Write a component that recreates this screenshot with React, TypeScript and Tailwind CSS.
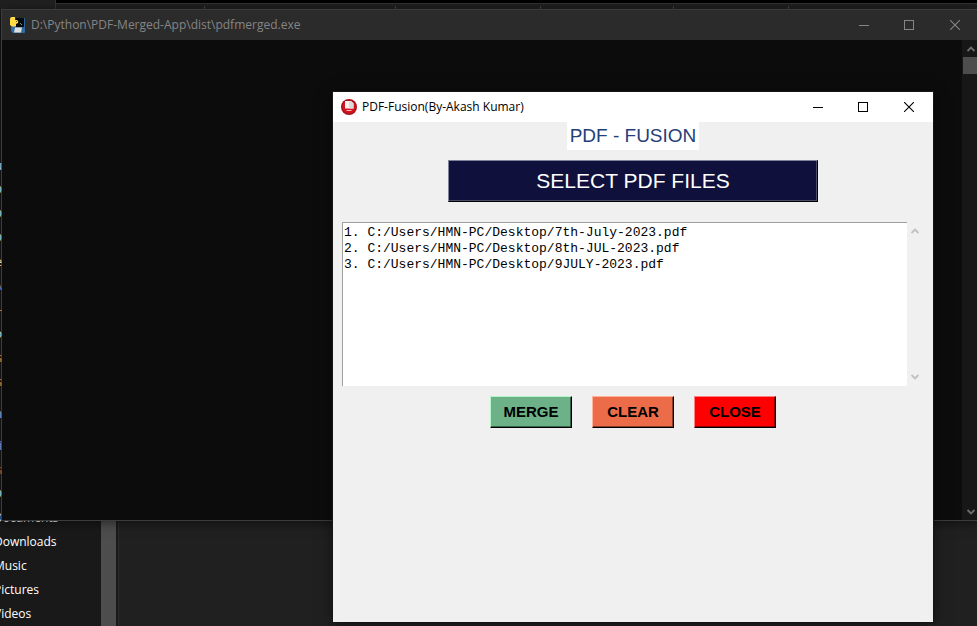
import React from "react";

const columnWidths = ["w-[191px]", "w-[145px]", "w-[133px]", "w-[115px]"];

const folders = ["Documents", "Downloads", "Music", "Pictures", "Videos"];

const edgeLabels = [
  { text: "u", color: "text-[#a5c4f0]" },
  { text: "D", color: "text-[#9cd3ee]" },
  { text: "D", color: "text-[#9cd3ee]" },
  { text: "D", color: "text-[#9cd3ee]" },
  { text: "e", color: "text-[#e8cf9d]" },
  { text: "\\", color: "text-[#6f8fe0]" },
  { text: "-", color: "text-[#b57a45]" },
  { text: "o", color: "text-[#b4e4e8]" },
  { text: "s", color: "text-[#d78a35]" },
  { text: "s", color: "text-[#d78a35]" },
];

const lowerEdgeLabels = [
  { text: "n", color: "text-[#8ea2f0]", height: "h-8" },
  { text: "i", color: "text-[#7f8df0]", height: "h-8" },
  { text: "s", color: "text-[#b0552a]", height: "h-4" },
  { text: "D", color: "text-[#9cd3ee]", height: "h-8" },
];

const files = [
  "C:/Users/HMN-PC/Desktop/7th-July-2023.pdf",
  "C:/Users/HMN-PC/Desktop/8th-JUL-2023.pdf",
  "C:/Users/HMN-PC/Desktop/9JULY-2023.pdf",
];

function WindowControls() {
  return (
    <div className="flex h-full">
      <button type="button" aria-label="Minimize" className="flex w-[45px] items-center justify-center">
        <svg width="10" height="10" viewBox="0 0 10 10" fill="none" stroke="currentColor" shapeRendering="crispEdges">
          <path d="M0 5.5H10" />
        </svg>
      </button>
      <button type="button" aria-label="Maximize" className="flex w-[45px] items-center justify-center">
        <svg width="10" height="10" viewBox="0 0 10 10" fill="none" stroke="currentColor" shapeRendering="crispEdges">
          <rect x="0.5" y="0.5" width="9" height="9" />
        </svg>
      </button>
      <button type="button" aria-label="Close window" className="flex w-12 items-center justify-center">
        <svg width="10" height="10" viewBox="0 0 10 10" fill="none" stroke="currentColor" strokeWidth="1.1">
          <path d="M0 0L10 10M10 0L0 10" />
        </svg>
      </button>
    </div>
  );
}

function Chevron({ down = false }: { down?: boolean }) {
  return (
    <svg width="8" height="6" viewBox="0 0 8 6" fill="none" stroke="currentColor" strokeWidth="1.8">
      <path d={down ? "M0.5 1L4 4.5L7.5 1" : "M0.5 5L4 1.5L7.5 5"} />
    </svg>
  );
}

function PythonIcon() {
  return (
    <svg width="16" height="16" viewBox="0 0 16 16" aria-hidden="true">
      <path d="M1 8H15V15Q15 16 14 16H3Q1 15 1 13Z" fill="#2f6ea5" />
      <rect x="11" y="1" width="4" height="11" fill="#2c659b" />
      <rect x="6" y="1" width="8" height="9" fill="#080a0c" />
      <path d="M0 2Q0 0 2 0H5V3H7Q9 4 8 6L6 7V9Q3 11 0 8Z" fill="#ffdc45" />
      <circle cx="6.5" cy="4.5" r="0.6" fill="#5c4a10" />
      <path d="M10 6L12 8" stroke="#7f8b96" />
      <path d="M5 10.5H12L11 15.5H4Z" fill="#dedede" />
    </svg>
  );
}

function FusionIcon() {
  return (
    <svg width="16" height="16" viewBox="0 0 16 16" aria-hidden="true">
      <circle cx="8" cy="8" r="8" fill="#a80f1c" />
      <circle cx="8" cy="8" r="6.6" fill="#d4131f" />
      <path d="M4 2H10L12.5 4.5V9.5H4Z" fill="#f7f0f0" />
      <path d="M8 2.5V9.5H12.5V4.5L10 2Z" fill="#ded8d8" />
      <path d="M5.5 11.5H10.5" stroke="#f4b9bc" strokeWidth="1" />
    </svg>
  );
}

function Explorer() {
  return (
    <div className="flex h-full flex-col bg-[#202020]">
      <div className="flex h-[10px] shrink-0">
        <div className="w-[55px] bg-[#202020]" />
        <div className="flex flex-1 flex-col border-l border-[#333333] bg-[#1f1f1f]">
          <div className="h-1 border-b border-[#303030] bg-black" />
          <div className="flex flex-1 pt-[2px]">
            <div className="w-[149px] border-r border-[#414141]" />
            {columnWidths.map((width) => (
              <div key={width} className={`${width} border-r border-[#414141]`} />
            ))}
          </div>
        </div>
      </div>
      <div className="flex flex-1">
        <nav className="w-[101px] overflow-hidden bg-[#191919] pt-[496px] font-['Open_Sans','Noto_Sans',sans-serif] text-[12px] text-white">
          <ul className="-ml-1.5">
            {folders.map((name) => (
              <li key={name} className="h-6 leading-6">
                <a href="#">{name}</a>
              </li>
            ))}
          </ul>
        </nav>
        <div className="w-[15px] bg-[#4d4d4d]" />
        <div className="mr-[2px] w-[3px] border-r border-[#2c2c2c] bg-[#191919]" />
        <main className="flex-1" />
      </div>
    </div>
  );
}

function EdgeLabels() {
  return (
    <div
      aria-hidden="true"
      className="absolute left-0 top-[154px] flex w-[2px] flex-col font-['Open_Sans','Noto_Sans',sans-serif] text-[12px]"
    >
      {edgeLabels.map((label, index) => (
        <span key={index} className={`flex h-6 items-center justify-end overflow-hidden ${label.color}`}>
          {label.text}
        </span>
      ))}
      <div className="h-1" />
      {lowerEdgeLabels.map((label, index) => (
        <span key={index} className={`flex items-center justify-end overflow-hidden ${label.height} ${label.color}`}>
          {label.text}
        </span>
      ))}
    </div>
  );
}

function ConsoleWindow() {
  return (
    <section className="absolute -right-0.5 left-px top-[9px] flex h-[512px] flex-col border-y border-l border-[#3c3c3c] bg-[#0c0c0c] shadow-[0_2px_10px_rgba(0,0,0,0.5)]">
      <header className="flex h-[30px] shrink-0 items-center bg-[#2b2b2b] pl-2 text-[#858585]">
        <PythonIcon />
        <h2 className="flex-1 pl-[5px] font-['Open_Sans','Noto_Sans',sans-serif] text-[12px]">
          D:\Python\PDF-Merged-App\dist\pdfmerged.exe
        </h2>
        <WindowControls />
      </header>
      <div className="flex flex-1 justify-end">
        <div className="flex w-[17px] flex-col items-end bg-[#171717] text-[#6f6f6f]">
          <div className="flex h-[17px] w-4 items-center justify-center">
            <Chevron />
          </div>
          <div className="h-[17px] w-4 bg-[#4d4d4d]" />
          <div className="flex-1" />
          <div className="flex h-[17px] w-4 items-center justify-center">
            <Chevron down />
          </div>
        </div>
      </div>
    </section>
  );
}

function FusionWindow() {
  return (
    <section className="absolute left-[333px] top-[92px] flex h-[530px] w-[600px] flex-col bg-[#f0f0f0] shadow-[0_2px_14px_rgba(0,0,0,0.5),0_0_0_1px_#1c1c1c]">
      <header className="flex h-[30px] shrink-0 items-center bg-white pl-2 text-black">
        <FusionIcon />
        <h1 className="flex-1 pl-[5px] font-['Open_Sans','Noto_Sans',sans-serif] text-[12px]">
          PDF-Fusion(By-Akash Kumar)
        </h1>
        <WindowControls />
      </header>
      <div className="flex flex-col items-center font-['Liberation_Sans',Arial,sans-serif]">
        <label htmlFor="select-files" className="bg-white px-[3px] text-[19px] leading-7 text-[#24407a]">
          PDF - FUSION
        </label>
        <button
          id="select-files"
          type="button"
          className="mt-[10px] h-[42px] w-[370px] border border-b-black border-l-[#80819a] border-r-black border-t-[#80819a] bg-[#10103c] text-[21px] text-white shadow-[inset_-1px_-1px_0_#4b4c68]"
        >
          SELECT PDF FILES
        </button>
        <div className="mt-5 flex h-[164px] self-stretch pl-[9px] pr-[11px]">
          <textarea
            readOnly
            aria-label="Selected PDF files"
            value={files.map((file, index) => `${index + 1}. ${file}`).join("\n")}
            className="flex-1 resize-none overflow-hidden border-l border-t border-[#a0a0a0] bg-white pl-px pt-[2px] font-['Liberation_Mono','Courier_New',monospace] text-[13px] leading-4 text-black outline-none"
          />
          <div className="flex w-[15px] flex-col items-center justify-between py-[6px] text-[#bfbfbf]">
            <Chevron />
            <Chevron down />
          </div>
        </div>
        <div className="mt-[10px] flex gap-5 text-[15px] font-bold text-black">
          <button
            type="button"
            className="h-8 w-[82px] border border-b-black border-l-[#b5f5c8] border-r-black border-t-[#b5f5c8] bg-[#6cb188] shadow-[inset_-1px_-1px_0_#366349]"
          >
            MERGE
          </button>
          <button
            type="button"
            className="h-8 w-[82px] border border-b-black border-l-[#ffb39d] border-r-black border-t-[#ffb39d] bg-[#ec6b48] shadow-[inset_-1px_-1px_0_#8a3d29]"
          >
            CLEAR
          </button>
          <button
            type="button"
            className="h-8 w-[82px] border border-b-black border-l-[#ff8080] border-r-black border-t-[#ff8080] bg-[#ff0000] shadow-[inset_-1px_-1px_0_#900000]"
          >
            CLOSE
          </button>
        </div>
      </div>
    </section>
  );
}

export default function App() {
  return (
    <div className="relative h-screen overflow-hidden bg-[#202020]">
      <Explorer />
      <ConsoleWindow />
      <EdgeLabels />
      <FusionWindow />
    </div>
  );
}
